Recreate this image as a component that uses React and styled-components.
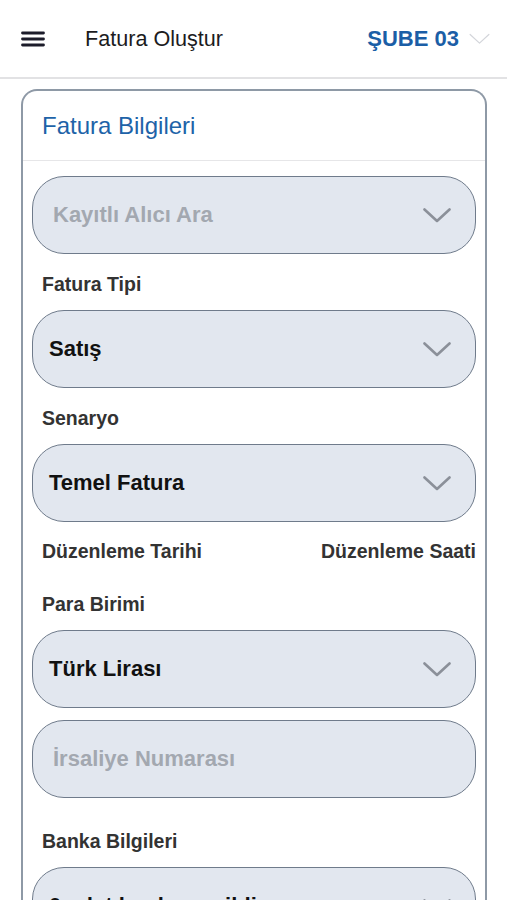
import React from 'react'
import styled, { createGlobalStyle } from 'styled-components'

const GlobalStyle = createGlobalStyle`
  html, body {
    margin: 0;
    padding: 0;
    background: #fff;
    font-family: "Liberation Sans", Arial, sans-serif;
    overflow: hidden;
  }
`

const Page = styled.div`
  width: 507px;
  height: 900px;
  overflow: hidden;
  background: #fff;
`

const TopBar = styled.header`
  display: flex;
  align-items: center;
  height: 77px;
  padding: 0 17px 0 21px;
  border-bottom: 2px solid #e2e2e4;
`

const MenuButton = styled.div`
  display: flex;
  width: 24px;
  margin-right: 40px;
`

const PageTitle = styled.h1`
  flex: 1;
  margin: 0;
  font-size: 21.6px;
  font-weight: 400;
  color: #1c1c1e;
`

const Branch = styled.div`
  display: flex;
  align-items: center;
  gap: 10px;
  font-size: 22px;
  font-weight: 700;
  color: #1b5ea6;
`

const Card = styled.section`
  margin: 10px 20px 0 21px;
  border: 2px solid #8e99a6;
  border-radius: 16px;
  border-bottom: none;
  border-bottom-left-radius: 0;
  border-bottom-right-radius: 0;
  min-height: 900px;
`

const CardHeader = styled.div`
  height: 69px;
  display: flex;
  align-items: center;
  padding: 0 19px;
  border-bottom: 1px solid #e6e6e8;
  font-size: 24px;
  color: #1e63a8;
`

const CardBody = styled.div`
  padding: 15px 9px 0;
  display: flex;
  flex-direction: column;
`

const Select = styled.div`
  height: 76px;
  box-sizing: content-box;
  border: 1px solid #6f7b8b;
  border-radius: 32px;
  background: #e2e7ef;
  display: flex;
  align-items: center;
  padding: 0 24px 0 ${p => (p.$placeholder ? 20 : 16)}px;
  margin-top: ${p => p.$gap || 0}px;
  font-size: 22px;
  font-weight: 700;
  color: ${p => (p.$placeholder ? '#a3a8b0' : '#111')};
  white-space: nowrap;
`

const SelectText = styled.span`
  flex: 1;
`

const LabelRow = styled.div`
  display: flex;
  justify-content: space-between;
  padding: ${p => p.$top || 19}px 0 ${p => p.$bottom || 15}px 10px;
  line-height: 22px;
  font-size: 19.5px;
  font-weight: 700;
  color: #333;
`

const Chevron = ({ color = '#8b9099', w = 28, h = 15, sw = 2.6 }) => (
  <svg width={w} height={h} viewBox="0 0 28 15" fill="none">
    <path d="M1.5 1.5 L14 13 L26.5 1.5" stroke={color} strokeWidth={sw} strokeLinecap="round" strokeLinejoin="round" />
  </svg>
)

const Hamburger = () => (
  <svg width="24" height="16" viewBox="0 0 24 16">
    <path d="M1.5 2 H22.5 M1.5 8 H22.5 M1.5 14 H22.5" stroke="#1c1c2a" strokeWidth="2.8" strokeLinecap="round" />
  </svg>
)

const Dropdown = ({ text, placeholder, gap, noChevron }) => (
  <Select $placeholder={placeholder} $gap={gap}>
    <SelectText>{text}</SelectText>
    {!noChevron && <Chevron />}
  </Select>
)

export default function App() {
  return (
    <Page>
      <GlobalStyle />
      <TopBar>
        <MenuButton><Hamburger /></MenuButton>
        <PageTitle>Fatura Oluştur</PageTitle>
        <Branch>
          ŞUBE 03
          <Chevron color="#d3d5da" w={21} h={12} sw={1.6} />
        </Branch>
      </TopBar>
      <Card>
        <CardHeader>Fatura Bilgileri</CardHeader>
        <CardBody>
          <Dropdown text="Kayıtlı Alıcı Ara" placeholder />
          <LabelRow>Fatura Tipi</LabelRow>
          <Dropdown text="Satış" />
          <LabelRow>Senaryo</LabelRow>
          <Dropdown text="Temel Fatura" />
          <LabelRow $top={18} $bottom={12}>
            <span>Düzenleme Tarihi</span>
            <span>Düzenleme Saati</span>
          </LabelRow>
          <LabelRow>Para Birimi</LabelRow>
          <Dropdown text="Türk Lirası" />
          <Dropdown text="İrsaliye Numarası" placeholder noChevron gap={12} />
          <LabelRow $top={32}>Banka Bilgileri</LabelRow>
          <Dropdown text="0 adet banka seçildi" />
        </CardBody>
      </Card>
    </Page>
  )
}
